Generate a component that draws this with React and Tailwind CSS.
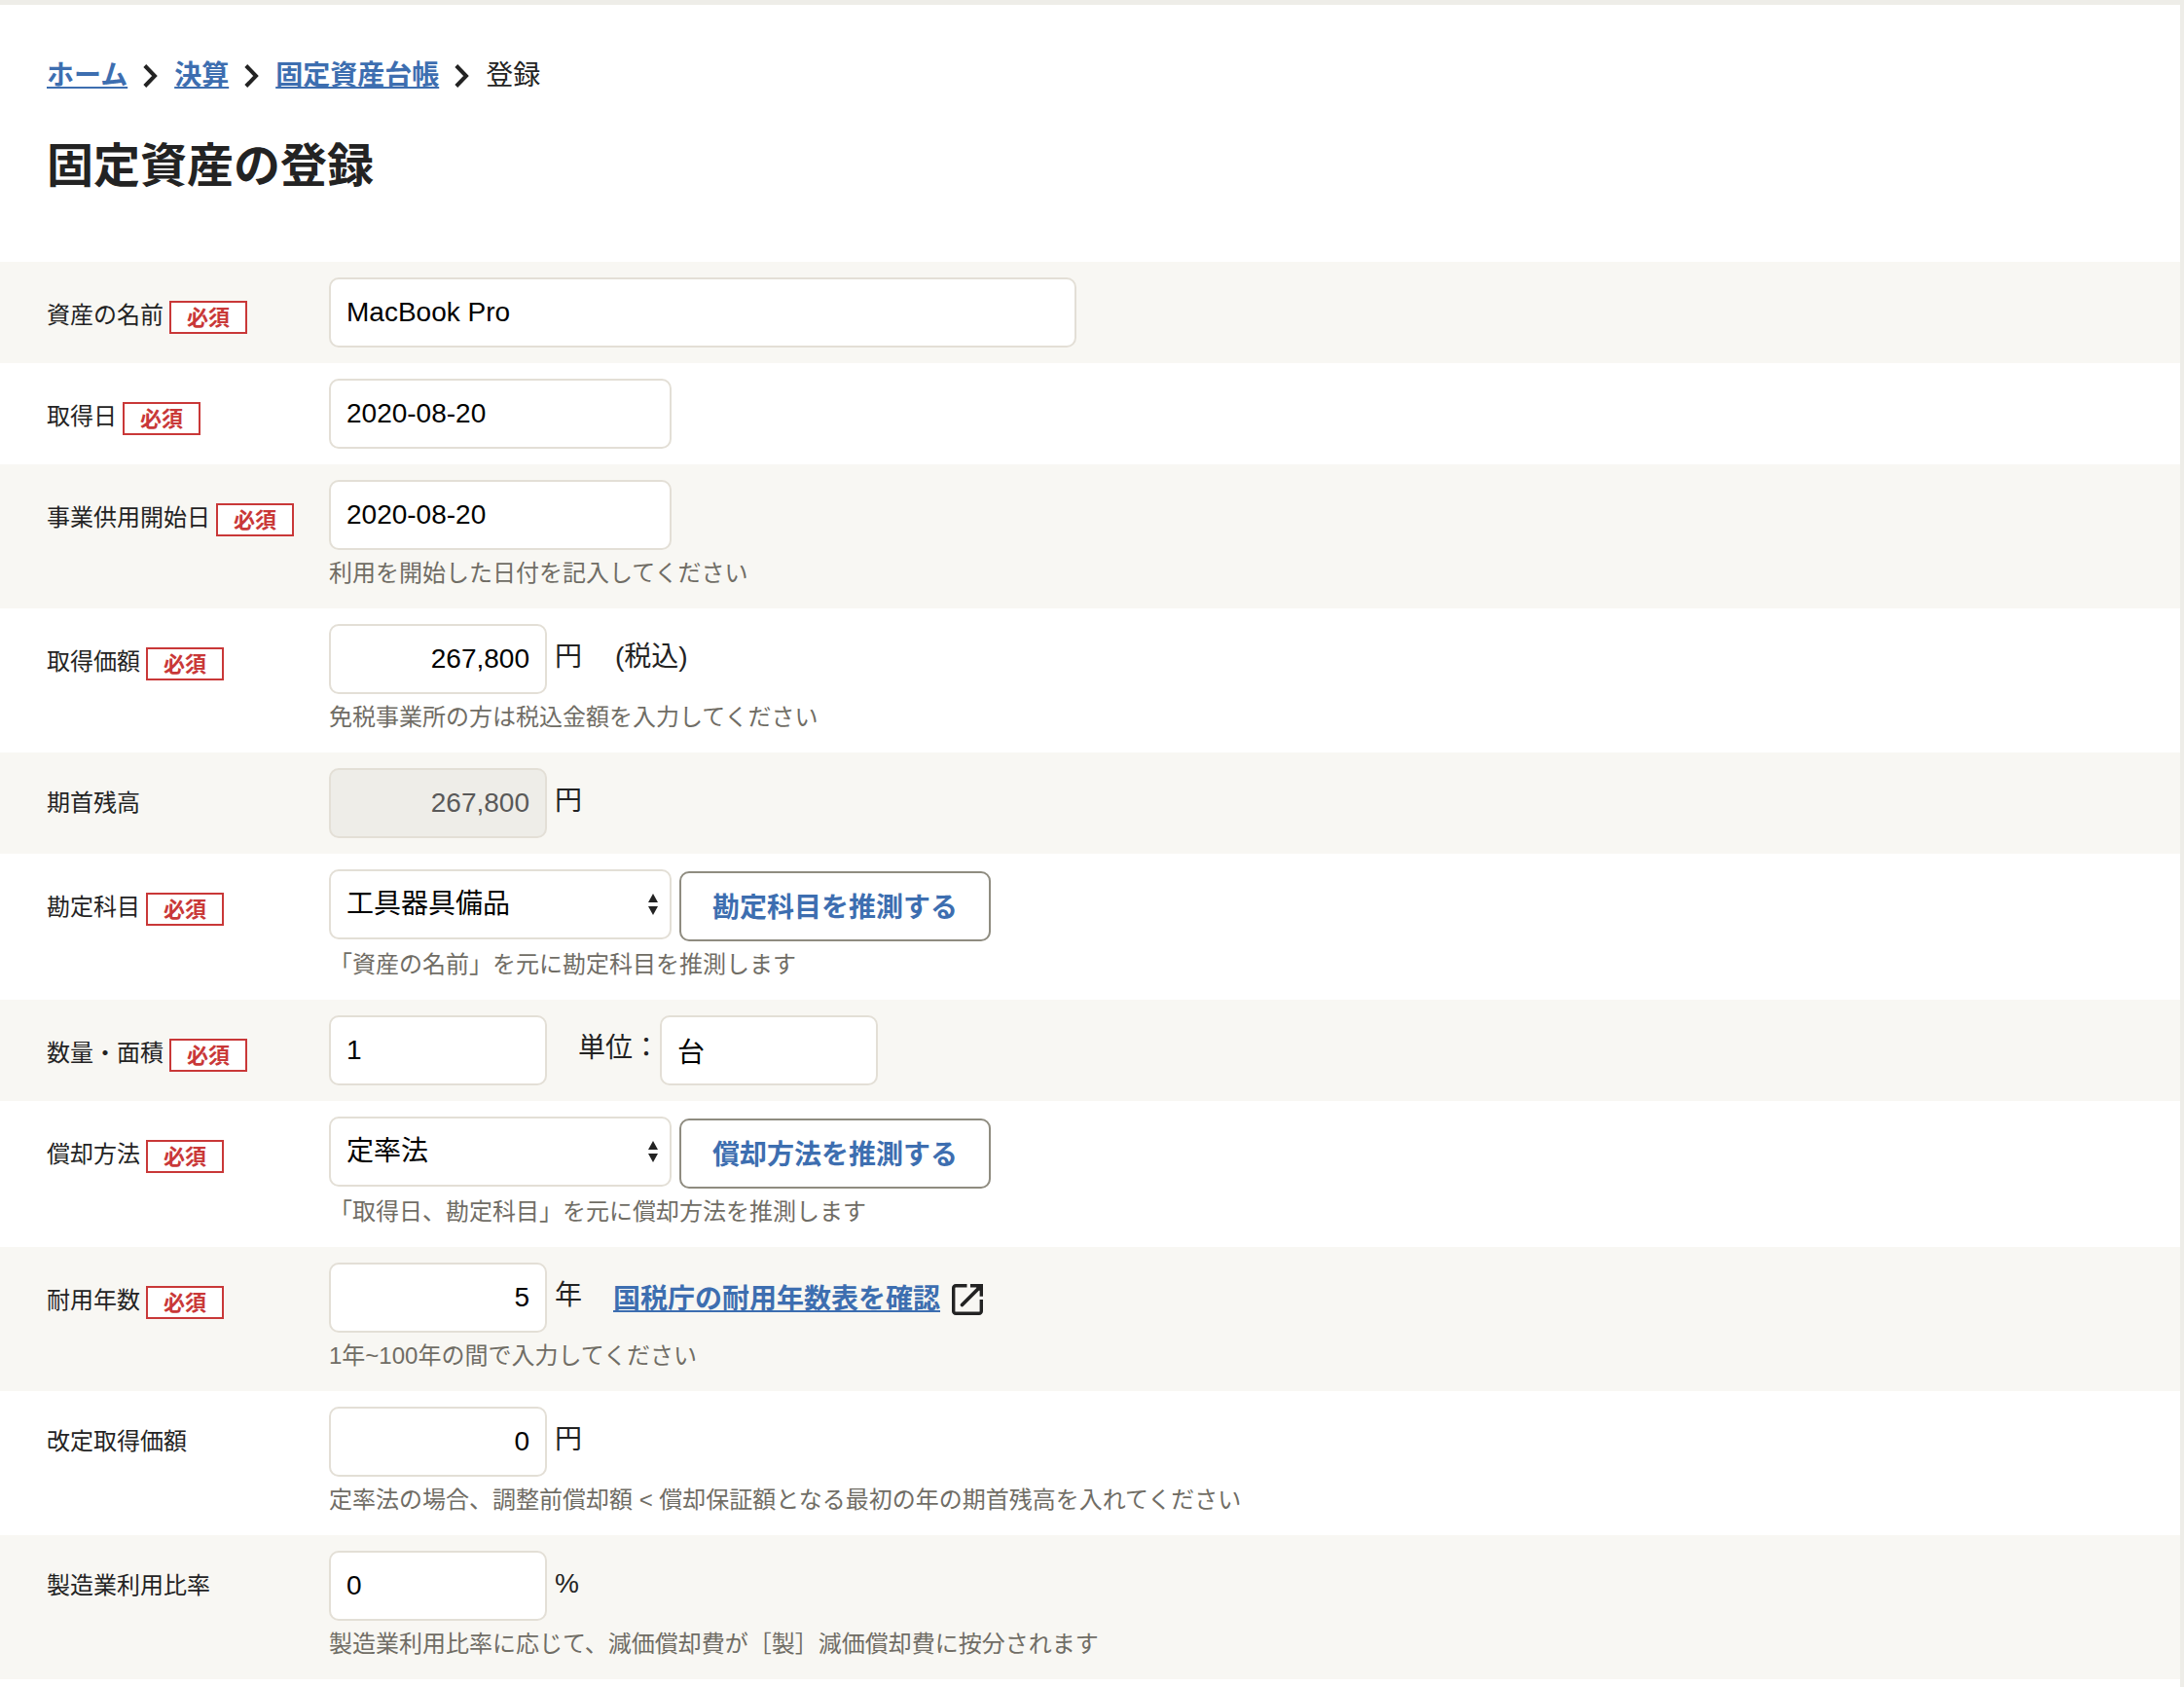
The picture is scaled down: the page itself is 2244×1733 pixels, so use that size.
const inputBase =
  'h-[72px] rounded-[10px] border-2 border-[#e3dfd6] bg-white px-4 text-[28px] leading-9 text-black disabled:bg-[#eeede8] disabled:text-[#595959]';

function Chevron() {
  return (
    <svg className="h-6 w-4 shrink-0" viewBox="0 0 16 24" fill="none" stroke="#232323" strokeWidth="4" aria-hidden="true">
      <path d="M1.800 1.500 L12 12 L1.800 22.500" />
    </svg>
  );
}

function OpenInNew() {
  return (
    <svg className="size-8 shrink-0" viewBox="0 0 32 32" aria-hidden="true">
      <path
        d="M15.500 1.700H4A2.300 2.300 0 0 0 1.700 4V28A2.300 2.300 0 0 0 4 30.300H28A2.300 2.300 0 0 0 30.300 28V16"
        fill="none"
        stroke="#232323"
        strokeWidth="3.400"
      />
      <path d="M10.500 21.500L27 5" fill="none" stroke="#232323" strokeWidth="3.800" strokeLinecap="round" />
      <path d="M19 0H32V12.800H28.600V7L25 3.400H19Z" fill="#232323" />
    </svg>
  );
}

function Row({ id, label, required, hint, children }) {
  return (
    <div className="flex items-start pb-4 pl-12 odd:bg-[#f8f7f3]">
      <label htmlFor={id} className="flex w-[290px] shrink-0 items-center gap-1.5 pt-[34px] text-2xl leading-[35px]">
        {label}
        {required && (
          <span className="mt-1.5 h-[34px] border-2 border-[#c93838] bg-white px-4 text-[22px] leading-8 font-bold text-[#c93838]">
            必須
          </span>
        )}
      </label>
      <div className="grow pt-4">
        <div className="flex items-center">{children}</div>
        {hint && <p className="pt-1.5 pb-0.5 text-2xl leading-9 text-[#706d65]">{hint}</p>}
      </div>
    </div>
  );
}

function Unit({ children }) {
  return <span className="mb-1 ml-2 text-[28px] leading-9">{children}</span>;
}

function SelectWithGuess({ id, value, action }) {
  return (
    <div className="flex items-start gap-2">
      <div className="relative">
        <select id={id} defaultValue={value} className={`${inputBase} w-[352px] appearance-none`}>
          <option>{value}</option>
        </select>
        <svg className="pointer-events-none absolute top-6 right-3.5 h-6 w-2.5" viewBox="0 0 10 24" fill="#232323" aria-hidden="true">
          <path d="M5 1 L10 10 H0 Z M0 14 H10 L5 23 Z" />
        </svg>
      </div>
      <button
        type="button"
        className="mt-0.5 h-[72px] rounded-[10px] border-2 border-[#8f8c80] bg-white px-8 pt-1 text-[28px] leading-9 font-bold text-[#3d6eb0]"
      >
        {action}
      </button>
    </div>
  );
}

const crumbs = ['ホーム', '決算', '固定資産台帳'];

export default function App() {
  return (
    <div
      lang="ja"
      className="min-h-screen border-t-5 border-r-4 border-[#eeede8] bg-white font-['Liberation_Sans','Noto_Sans_CJK_JP',sans-serif] text-[#232323]"
    >
      <header className="px-12 pt-[55px] pb-[63px]">
        <nav className="flex items-center gap-4 text-[28px] leading-9">
          {crumbs.map((crumb) => (
            <div key={crumb} className="flex items-center gap-4">
              <a href="#" className="font-bold text-[#3d6eb0] underline decoration-2 underline-offset-2">
                {crumb}
              </a>
              <Chevron />
            </div>
          ))}
          <span>登録</span>
        </nav>
        <h1 className="pt-10 text-5xl leading-[70px] font-bold">固定資産の登録</h1>
      </header>

      <form>
        <Row id="name" label="資産の名前" required>
          <input id="name" type="text" defaultValue="MacBook Pro" className={`${inputBase} w-3xl`} />
        </Row>
        <Row id="acquired" label="取得日" required>
          <input id="acquired" type="text" defaultValue="2020-08-20" className={`${inputBase} w-[352px]`} />
        </Row>
        <Row id="started" label="事業供用開始日" required hint="利用を開始した日付を記入してください">
          <input id="started" type="text" defaultValue="2020-08-20" className={`${inputBase} w-[352px]`} />
        </Row>
        <Row id="price" label="取得価額" required hint="免税事業所の方は税込金額を入力してください">
          <input id="price" type="text" defaultValue="267,800" className={`${inputBase} w-56 text-right`} />
          <Unit>円</Unit>
          <span className="mb-1 ml-[34px] text-[28px] leading-9">(税込)</span>
        </Row>
        <Row id="balance" label="期首残高">
          <input id="balance" type="text" disabled defaultValue="267,800" className={`${inputBase} w-56 text-right`} />
          <Unit>円</Unit>
        </Row>
        <Row id="account" label="勘定科目" required hint="「資産の名前」を元に勘定科目を推測します">
          <SelectWithGuess id="account" value="工具器具備品" action="勘定科目を推測する" />
        </Row>
        <Row id="quantity" label="数量・面積" required>
          <input id="quantity" type="text" defaultValue="1" className={`${inputBase} w-56`} />
          <label htmlFor="unit" className="mb-1 ml-8 text-[28px] leading-9">
            単位：
          </label>
          <input id="unit" type="text" defaultValue="台" className={`${inputBase} w-56`} />
        </Row>
        <Row id="method" label="償却方法" required hint="「取得日、勘定科目」を元に償却方法を推測します">
          <SelectWithGuess id="method" value="定率法" action="償却方法を推測する" />
        </Row>
        <Row id="years" label="耐用年数" required hint="1年~100年の間で入力してください">
          <input id="years" type="text" defaultValue="5" className={`${inputBase} w-56 text-right`} />
          <Unit>年</Unit>
          <a href="#" className="mt-1 ml-8 flex items-center gap-3 text-[28px] leading-9 font-bold text-[#3d6eb0]">
            <span className="underline decoration-2 underline-offset-2">国税庁の耐用年数表を確認</span>
            <OpenInNew />
          </a>
        </Row>
        <Row id="revised" label="改定取得価額" hint="定率法の場合、調整前償却額 < 償却保証額となる最初の年の期首残高を入れてください">
          <input id="revised" type="text" defaultValue="0" className={`${inputBase} w-56 text-right`} />
          <Unit>円</Unit>
        </Row>
        <Row id="ratio" label="製造業利用比率" hint="製造業利用比率に応じて、減価償却費が［製］減価償却費に按分されます">
          <input id="ratio" type="text" defaultValue="0" className={`${inputBase} w-56`} />
          <Unit>%</Unit>
        </Row>
      </form>
    </div>
  );
}
